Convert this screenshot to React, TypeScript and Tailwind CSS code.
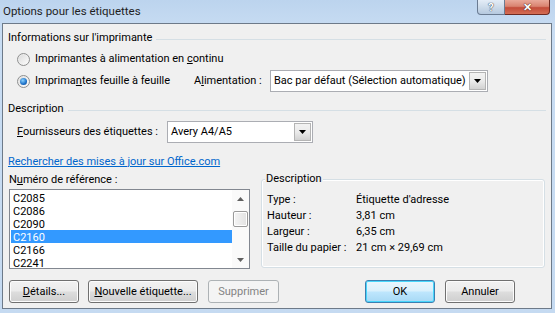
import type { ReactNode } from "react";

function cx(...values: Array<string | false | null | undefined>) {
  return values.filter(Boolean).join(" ");
}

function GroupHeader({ title, className }: { title: ReactNode; className?: string }) {
  return (
    <div className={cx("flex h-[14px] items-center gap-[4px]", className)}>
      <span className="leading-[14px]">{title}</span>
      <div className="mt-[2px] h-px flex-1 bg-[#d5dfe5]" />
    </div>
  );
}

function Radio({ checked }: { checked?: boolean }) {
  return (
    <span className="flex h-[13px] w-[13px] items-center justify-center rounded-full border border-[#8e8f8f] bg-gradient-to-br from-[#e6e6e6] to-[#f8f8f8]">
      <span className="flex h-[9px] w-[9px] items-center justify-center rounded-full bg-gradient-to-br from-[#dcdcdc] to-[#fbfbfb]">
        {checked ? (
          <span className="h-[7px] w-[7px] rounded-full bg-[radial-gradient(circle_at_40%_35%,#8ad2ff,#1a6fc7_60%,#0d3f84)]" />
        ) : null}
      </span>
    </span>
  );
}

function ComboArrow() {
  return (
    <span className="flex h-full w-[17px] items-center justify-center border border-[#b4b4b4] bg-gradient-to-b from-[#f2f2f2] via-[#ebebeb] to-[#d2d2d2]">
      <svg width="7" height="4" viewBox="0 0 7 4">
        <path d="M0 0h7L3.5 4z" fill="#000" />
      </svg>
    </span>
  );
}

function Combo({ value, className }: { value: string; className?: string }) {
  return (
    <div className={cx("flex h-[22px] items-center border border-[#abadb3] bg-white", className)}>
      <span className="flex-1 truncate pl-[3px] pt-px">{value}</span>
      <span className="h-full p-px">
        <ComboArrow />
      </span>
    </div>
  );
}

function DialogButton({
  children,
  className,
  variant = "normal",
}: {
  children: ReactNode;
  className?: string;
  variant?: "normal" | "default" | "disabled";
}) {
  return (
    <button
      type="button"
      className={cx(
        "flex h-[23px] items-center justify-center rounded-[3px] border pt-px",
        variant === "normal" &&
          "border-[#707070] bg-[linear-gradient(#f2f2f2_0%,#ebebeb_48%,#dddddd_52%,#cfcfcf_100%)] shadow-[inset_0_0_0_1px_#fcfcfc]",
        variant === "default" &&
          "border-[#3c7fb1] bg-[linear-gradient(#eaf6fd_0%,#d9f0fc_48%,#bee6fd_52%,#a7d9f5_100%)] shadow-[inset_0_0_0_1px_#48d6fb]",
        variant === "disabled" && "border-[#adb2b5] bg-[#f4f4f4] text-[#838383]",
        className,
      )}
    >
      {children}
    </button>
  );
}

const references = ["C2085", "C2086", "C2090", "C2160", "C2166", "C2241"];

const details: Array<[string, string]> = [
  ["Type :", "Étiquette d'adresse"],
  ["Hauteur :", "3,81 cm"],
  ["Largeur :", "6,35 cm"],
  ["Taille du papier :", "21 cm × 29,69 cm"],
];

export default function App() {
  return (
    <div className="flex h-[313px] w-[555px] flex-col bg-[linear-gradient(180deg,#bcd4ee_0%,#c9ddf3_10%,#c5daf1_100%)] font-['Roboto',sans-serif] text-[11px] text-black">
      {/* title bar */}
      <div className="flex h-[23px] items-start justify-between">
        <div className="pl-[3px] pt-[3px] text-[11.5px] leading-[16px] text-[#1e1e1e]">Options pour les étiquettes</div>
        <div className="mr-[5px] flex h-[15px]">
          <div className="flex w-[28px] items-center justify-center rounded-bl-[4px] border border-t-0 border-[#6a7b92] bg-[linear-gradient(#e4edf7_0%,#cddbea_50%,#b5c9df_100%)]">
            <span className="text-[11px] font-bold leading-none text-white [text-shadow:0_0_1px_#2b3a4e,0_0_1px_#2b3a4e]">?</span>
          </div>
          <div className="flex w-[45px] items-center justify-center rounded-br-[4px] border border-l-0 border-t-0 border-[#6e2a22] bg-[linear-gradient(#e9a99a_0%,#d98370_45%,#c34c3a_55%,#d46e55_100%)]">
            <span className="text-[11px] font-bold leading-none text-white [text-shadow:0_0_1px_#47140d,0_0_1px_#47140d]">✕</span>
          </div>
        </div>
      </div>

      {/* client area */}
      <div className="mb-[4px] ml-[2px] mr-[3px] flex flex-1 flex-col border border-[#6d7a89] bg-[#f0f0f0] px-[5px]">
        <GroupHeader title="Informations sur l'imprimante" className="mt-[7px]" />

        <div className="ml-[9px] mt-[6px] flex h-[16px] items-center gap-[5px]">
          <Radio />
          <span>
            Imprimantes à alimentation en <span className="underline">c</span>ontinu
          </span>
        </div>

        <div className="ml-[9px] mt-[3px] flex h-[22px] items-center">
          <Radio checked />
          <span className="ml-[5px] w-[159px]">
            Imprima<span className="underline">n</span>tes feuille à feuille
          </span>
          <span className="w-[76px]">
            A<span className="underline">l</span>imentation :
          </span>
          <Combo value="Bac par défaut (Sélection automatique)" className="w-[218px]" />
        </div>

        <GroupHeader title="Description" className="mt-[10px]" />

        <div className="ml-[9px] mt-[5px] flex h-[22px] items-center">
          <span className="w-[150px]">
            <span className="underline">F</span>ournisseurs des étiquettes :
          </span>
          <Combo value="Avery A4/A5" className="w-[146px]" />
        </div>

        <div className="mt-[11px] flex h-[16px] items-center">
          <span className="text-[#0066cc] underline">Rechercher des mises à jour sur Office.com</span>
        </div>

        <div className="mt-[2px] flex">
          <div className="flex w-[242px] flex-col pl-[1px]">
            <div className="flex h-[16px] items-center">
              <span>
                N<span className="underline">u</span>méro de référence :
              </span>
            </div>
            <div className="mt-px flex h-[80px] border border-[#828790] bg-white">
              <div className="flex flex-1 flex-col pl-px pt-px">
                {references.map((ref) => (
                  <div
                    key={ref}
                    className={cx(
                      "h-[13px] pl-[2px] pt-px leading-[13px]",
                      ref === "C2160" && "bg-[#3399ff] text-white",
                    )}
                  >
                    {ref}
                  </div>
                ))}
              </div>
              <div className="flex w-[17px] flex-col items-center bg-[#fafafa]">
                <div className="flex h-[17px] w-full items-center justify-center">
                  <svg width="7" height="4" viewBox="0 0 7 4">
                    <path d="M3.5 0L7 4H0z" fill="#606060" />
                  </svg>
                </div>
                <div className="mt-[4px] h-[16px] w-[15px] rounded-[2px] border border-[#9a9a9a] bg-[linear-gradient(90deg,#f4f4f4,#e2e2e2)] shadow-[inset_0_0_0_1px_#fff]" />
                <div className="flex-1" />
                <div className="flex h-[17px] w-full items-center justify-center">
                  <svg width="7" height="4" viewBox="0 0 7 4">
                    <path d="M0 0h7L3.5 4z" fill="#606060" />
                  </svg>
                </div>
              </div>
            </div>
          </div>

          <div className="relative ml-[11px] mr-[1px] mt-[7px] h-[89px] flex-1 rounded-[3px] border border-[#d5dfe5] shadow-[inset_0_0_0_1px_#fff]">
            <span className="absolute -top-[8px] left-[3px] bg-[#f0f0f0] px-px leading-[14px]">Description</span>
            <div className="flex flex-col pl-[5px] pt-[12px]">
              {details.map(([label, value]) => (
                <div key={label} className="flex h-[16px] items-center">
                  <span className="w-[89px]">{label}</span>
                  <span>{value}</span>
                </div>
              ))}
            </div>
          </div>
        </div>

        <div className="mt-[11px] flex">
          <DialogButton className="ml-px w-[70px]">
            <span>
              <span className="underline">D</span>étails...
            </span>
          </DialogButton>
          <DialogButton className="ml-[9px] w-[110px]">
            <span>
              <span className="underline">N</span>ouvelle étiquette...
            </span>
          </DialogButton>
          <DialogButton variant="disabled" className="ml-[10px] w-[71px]">
            Supprimer
          </DialogButton>
          <DialogButton variant="default" className="ml-[86px] w-[70px]">
            OK
          </DialogButton>
          <DialogButton className="ml-[10px] w-[70px]">Annuler</DialogButton>
        </div>
      </div>
    </div>
  );
}
